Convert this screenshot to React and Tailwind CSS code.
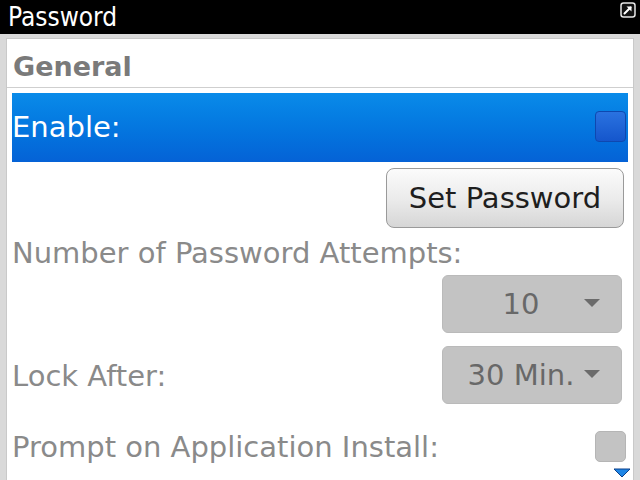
import React from "react";

function Caret({ className = "" }) {
  return (
    <svg width="18" height="10" viewBox="0 0 18 10" className={className}>
      <polygon points="1,1 17,1 9,9" fill="#6b6b6b" />
    </svg>
  );
}

function Dropdown({ value }) {
  return (
    <div className="w-[180px] h-[58px] rounded-[6px] bg-[#c3c3c3] border border-[#bababa] flex items-center relative">
      <span className="flex-1 text-center text-[29px] text-[#686868] pr-[28px] pl-[6px] leading-none">{value}</span>
      <Caret className="absolute right-[20px] top-[22px]" />
    </div>
  );
}

export default function App() {
  return (
    <div
      className="w-[640px] h-[480px] bg-[#d9d9d9] overflow-hidden relative flex flex-col"
      style={{ fontFamily: '"DejaVu Sans", "Liberation Sans", sans-serif' }}
    >
      {/* Title bar */}
      <div className="h-[34px] bg-black flex items-center justify-between pl-[8px] pr-[4px] shrink-0">
        <span
          className="text-white text-[26px] leading-none"
          style={{ fontFamily: '"DejaVu Sans Condensed", "DejaVu Sans", sans-serif', fontStretch: "condensed" }}
        >
          Password
        </span>
        <svg width="16" height="16" viewBox="0 0 16 16" className="mb-[14px]">
          <rect x="1" y="1" width="14" height="14" rx="2.5" fill="#111" stroke="#e6e6e6" strokeWidth="1.5" />
          <path d="M4.5 11.5 L10.5 5.5" stroke="#fff" strokeWidth="2" strokeLinecap="round" />
          <polygon points="6.5,4.5 11.5,4.5 11.5,9.5" fill="#fff" />
        </svg>
      </div>

      {/* Body */}
      <div className="flex-1 pl-[6px] pr-[6px] pt-[4px] relative">
        <div className="h-full bg-white border border-[#c9c9c9] border-b-0 flex flex-col">
          {/* Section header */}
          <div className="h-[49px] flex items-center pl-[6px] border-b border-[#cfcfcf] shrink-0">
            <span className="text-[27px] font-bold text-[#7a7a7a] leading-none mt-[6px]">General</span>
          </div>

          {/* Enable row (focused) */}
          <div className="mx-[5px] mt-[5px] h-[69px] bg-gradient-to-b from-[#0a8be9] to-[#0562d6] flex items-center justify-between pl-[0px] pr-[2px] shrink-0">
            <span className="text-white text-[29px] leading-none">Enable:</span>
            <div className="w-[31px] h-[31px] rounded-[4px] bg-gradient-to-b from-[#2a72e0] to-[#1556cc] border border-[#0e48b0] mb-[3px]" />
          </div>

          {/* Set Password button */}
          <div className="flex justify-end pr-[9px] mt-[6px]">
            <div className="w-[238px] h-[60px] rounded-[8px] border border-[#9a9a9a] bg-gradient-to-b from-[#fbfbfb] via-[#ececec] to-[#d6d6d6] flex items-center justify-center">
              <span className="text-[29px] text-[#1e1e1e] leading-none">Set Password</span>
            </div>
          </div>

          {/* Number of attempts */}
          <div className="pl-[5px] mt-[9px] h-[32px] flex items-center">
            <span className="text-[29px] text-[#8a8a8a] leading-none">Number of Password Attempts:</span>
          </div>
          <div className="flex justify-end pr-[11px] mt-[6px]">
            <Dropdown value="10" />
          </div>

          {/* Lock after */}
          <div className="flex items-center justify-between pl-[5px] pr-[11px] mt-[13px]">
            <span className="text-[29px] text-[#8a8a8a] leading-none mt-[3px]">Lock After:</span>
            <Dropdown value="30 Min." />
          </div>

          {/* Prompt on install */}
          <div className="flex items-center justify-between pl-[5px] pr-[7px] mt-[26px]">
            <span className="text-[29px] text-[#8a8a8a] leading-none mt-[3px]">Prompt on Application Install:</span>
            <div className="w-[31px] h-[31px] rounded-[5px] bg-[#c3c3c3] border border-[#b5b5b5]" />
          </div>
        </div>

        {/* scroll indicator */}
        <svg width="18" height="10" viewBox="0 0 18 10" className="absolute right-[9px] bottom-[2px]">
          <polygon points="1,1 17,1 9,9" fill="#1e86e6" stroke="#0b3f8a" strokeWidth="1" />
        </svg>
      </div>
    </div>
  );
}
